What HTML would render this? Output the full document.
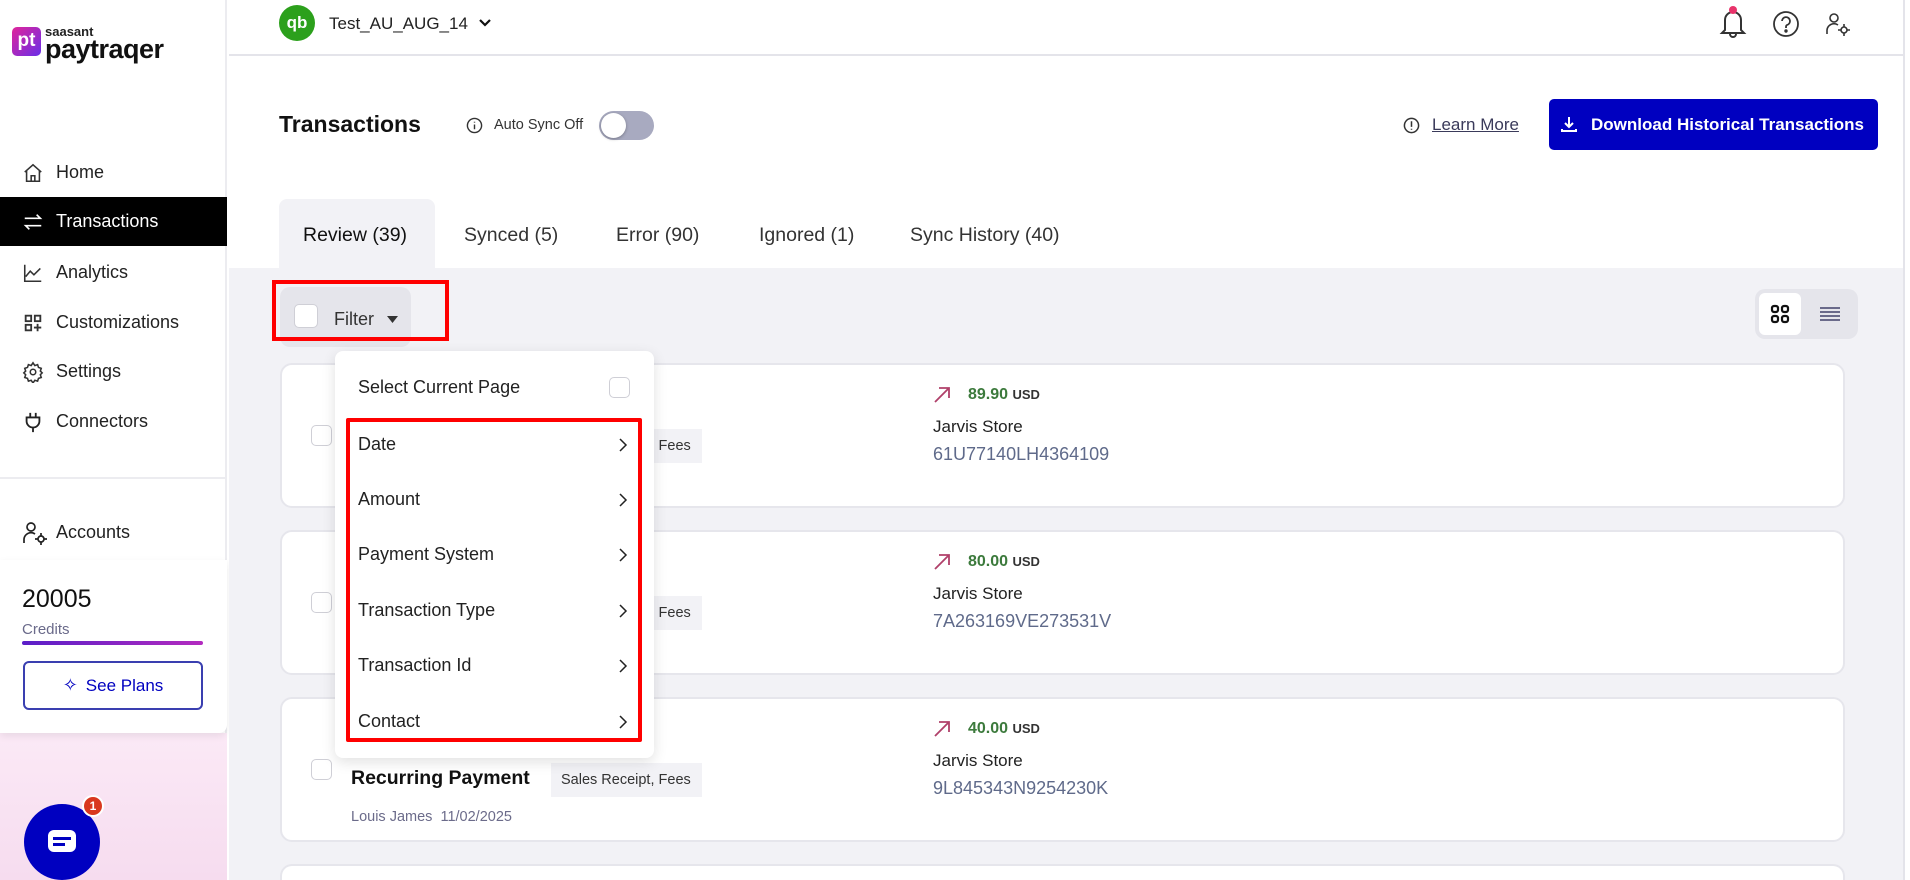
<!DOCTYPE html>
<html style="overflow:hidden;width:1910px;height:880px"><head><meta charset="utf-8"><style>
*{box-sizing:border-box;margin:0;padding:0}
body{width:1910px;height:880px;overflow:hidden;background:#fff;font-family:"Liberation Sans",sans-serif;color:#1a1a1a}
#w{position:relative;width:1910px;height:880px;overflow:hidden}
.a{position:absolute}
.nav{position:absolute;left:0;width:227px;height:49px;display:flex;align-items:center;font-size:18px;color:#222}
.nav svg{position:absolute;left:22px}
.nav span{position:absolute;left:56px}
.card{position:absolute;left:280px;width:1565px;height:145px;background:#fff;border:2px solid #e6e6ec;border-radius:12px}
.cb{position:absolute;width:21px;height:21px;border:1.5px solid #cfcfd6;border-radius:5px;background:#fff}
.mi{position:absolute;left:358px;font-size:18px;color:#222}
.chev{position:absolute;left:618px}
</style></head><body><div id="w">
<!-- sidebar -->
<div class="a" style="left:0;top:0;width:227px;height:880px;border-right:2px solid #ececf0;background:#fff"></div>
<div class="a" style="left:0;top:733px;width:227px;height:147px;background:linear-gradient(180deg,#fbe9f6,#f6dcef)"></div>
<div class="a" style="left:12px;top:27px;width:29px;height:29px;border-radius:5px;background:linear-gradient(135deg,#e0259b,#6a2ee8);color:#fff;font-weight:bold;font-size:19px;line-height:27px;text-align:center">pt</div>
<div class="a" style="left:45px;top:24px;font-size:13px;font-weight:bold;color:#222">saasant</div>
<div class="a" style="left:45px;top:34px;font-size:27px;font-weight:bold;color:#111;letter-spacing:-0.5px">paytraqer</div>

<div class="nav" style="top:148px"><svg width="22" height="22" viewBox="0 0 24 24" fill="none" stroke="#333" stroke-width="1.7"><path d="M3 11L12 3l9 8M5 9v12h14V9M10 21v-6h4v6"/></svg><span>Home</span></div>
<div class="nav" style="top:197px;background:#000;color:#fff"><svg width="22" height="22" viewBox="0 0 24 24" fill="none" stroke="#fff" stroke-width="1.8"><path d="M3 8h17l-4-4M21 16H4l4 4"/></svg><span>Transactions</span></div>
<div class="nav" style="top:248px"><svg width="22" height="22" viewBox="0 0 24 24" fill="none" stroke="#333" stroke-width="1.7"><path d="M3 3v18h18M4 16l5-6 4 4 7-7"/></svg><span>Analytics</span></div>
<div class="nav" style="top:298px"><svg width="22" height="22" viewBox="0 0 24 24" fill="none" stroke="#333" stroke-width="2"><rect x="4" y="4" width="6" height="6"/><rect x="14" y="4" width="6" height="6"/><rect x="4" y="14" width="6" height="6"/><path d="M17 13v8M13 17h8"/></svg><span>Customizations</span></div>
<div class="nav" style="top:347px"><svg width="22" height="22" viewBox="0 0 24 24" fill="none" stroke="#333" stroke-width="1.7"><circle cx="12" cy="12" r="3"/><path d="M12 2l2 3 3-1 1 3 3 1-1 3 2 2-2 2 1 3-3 1-1 3-3-1-2 3-2-3-3 1-1-3-3-1 1-3-2-2 2-2-1-3 3-1 1-3 3 1z"/></svg><span>Settings</span></div>
<div class="nav" style="top:397px"><svg width="22" height="22" viewBox="0 0 24 24" fill="none" stroke="#222" stroke-width="2"><path d="M9 2v5M15 2v5M5 7h14v4a7 7 0 0 1-14 0zM12 18v5"/></svg><span>Connectors</span></div>
<div class="a" style="left:0;top:477px;width:227px;height:2px;background:#ececf0"></div>
<div class="nav" style="top:508px"><svg width="26" height="26" viewBox="0 0 26 26" fill="none" stroke="#222" stroke-width="1.7"><circle cx="9" cy="7" r="4"/><path d="M2 23v-4a7 7 0 0 1 11-5"/><circle cx="19" cy="19" r="3"/><path d="M19 13v3M19 22v3M13 19h3M22 19h3"/></svg><span style="left:56px">Accounts</span></div>

<div class="a" style="left:0;top:560px;width:227px;height:173px;background:#fff;border-radius:0 0 8px 0;box-shadow:0 3px 8px rgba(0,0,0,.08)"></div>
<div class="a" style="left:22px;top:585px;font-size:25px;color:#111">20005</div>
<div class="a" style="left:22px;top:621px;font-size:15px;color:#6a6a8a">Credits</div>
<div class="a" style="left:22px;top:641px;width:181px;height:4px;border-radius:2px;background:linear-gradient(90deg,#5a1ec8,#b32bbf)"></div>
<div class="a" style="left:23px;top:661px;width:180px;height:49px;border:2px solid #3a3fb0;border-radius:6px;display:flex;align-items:center;justify-content:center;gap:8px;color:#0000c0;font-size:17px"><span style="font-size:18px">✧</span>See Plans</div>

<div class="a" style="left:24px;top:804px;width:76px;height:76px;border-radius:50%;background:#0000c0"></div>
<div class="a" style="left:48px;top:830px;width:28px;height:22px;border-radius:6px;background:#fff"></div>
<div class="a" style="left:53px;top:837px;width:18px;height:3px;background:#0000c0"></div>
<div class="a" style="left:53px;top:843px;width:12px;height:3px;background:#0000c0"></div>
<div class="a" style="left:82px;top:795px;width:22px;height:22px;border-radius:50%;background:#d9381e;border:2px solid #fff;color:#fff;font-size:12px;font-weight:bold;text-align:center;line-height:18px">1</div>

<!-- header -->
<div class="a" style="left:229px;top:54px;width:1675px;height:2px;background:#e4e4ea"></div>
<div class="a" style="left:1903px;top:0;width:2px;height:880px;background:#e4e4ea"></div>
<div class="a" style="left:279px;top:5px;width:36px;height:36px;border-radius:50%;background:#2ca01c;color:#fff;font-weight:bold;font-size:17px;line-height:36px;text-align:center">qb</div>
<div class="a" style="left:329px;top:14px;font-size:17px;color:#222">Test_AU_AUG_14</div>
<svg class="a" style="left:478px;top:17px" width="14" height="12" viewBox="0 0 14 12"><path d="M2 3l5 5 5-5" fill="none" stroke="#111" stroke-width="2.2"/></svg>
<svg class="a" style="left:1719px;top:3px" width="28" height="36" viewBox="0 0 28 36" fill="none" stroke="#333" stroke-width="2"><path d="M6 27V17a8 8 0 0 1 16 0v10l3 3H3zM11 31a3 3 0 0 0 6 0"/><circle cx="14" cy="7" r="4" fill="#e8336b" stroke="none"/></svg>
<svg class="a" style="left:1772px;top:10px" width="28" height="28" viewBox="0 0 28 28" fill="none" stroke="#333" stroke-width="1.8"><circle cx="14" cy="14" r="12"/><path d="M10 11a4 4 0 1 1 5 4c-1 .5-1 1-1 3"/><circle cx="14" cy="21" r=".8" fill="#333"/></svg>
<svg class="a" style="left:1825px;top:11px" width="26" height="26" viewBox="0 0 26 26" fill="none" stroke="#333" stroke-width="1.6"><circle cx="9" cy="7" r="4"/><path d="M2 23v-4a7 7 0 0 1 11-5"/><circle cx="19" cy="19" r="3"/><path d="M19 13v3M19 22v3M13 19h3M22 19h3"/></svg>

<div class="a" style="left:279px;top:111px;font-size:23px;font-weight:bold;color:#111">Transactions</div>
<svg class="a" style="left:466px;top:117px" width="17" height="17" viewBox="0 0 18 18" fill="none" stroke="#333" stroke-width="1.5"><circle cx="9" cy="9" r="7.5"/><path d="M9 8v5M9 5v1"/></svg>
<div class="a" style="left:494px;top:117px;font-size:14.5px;color:#333">Auto Sync Off</div>
<div class="a" style="left:599px;top:111px;width:55px;height:29px;border-radius:15px;background:#a8aac0"></div>
<div class="a" style="left:601px;top:113px;width:25px;height:25px;border-radius:50%;background:#fff;box-shadow:0 1px 3px rgba(0,0,0,.3)"></div>

<svg class="a" style="left:1403px;top:117px" width="17" height="17" viewBox="0 0 18 18" fill="none" stroke="#333" stroke-width="1.6"><circle cx="9" cy="9" r="7.5"/><path d="M9 4.5v6M9 12.5v1"/></svg>
<div class="a" style="left:1432px;top:115px;font-size:17px;color:#3a3a5a;text-decoration:underline">Learn More</div>
<div class="a" style="left:1549px;top:99px;width:329px;height:51px;border-radius:5px;background:#0000c0;color:#fff;font-size:17px;font-weight:bold;display:flex;align-items:center;padding-left:42px;white-space:nowrap">Download Historical Transactions</div>
<svg class="a" style="left:1560px;top:115px" width="18" height="18" viewBox="0 0 18 18" fill="none" stroke="#fff" stroke-width="2"><path d="M9 2v10M5 8l4 4 4-4M2 14v2h14v-2"/></svg>

<!-- tabs -->
<div class="a" style="left:229px;top:268px;width:1674px;height:612px;background:#f2f2f6"></div>
<div class="a" style="left:279px;top:199px;width:156px;height:70px;background:#f2f2f6;border-radius:8px 8px 0 0"></div>
<div class="a" style="left:303px;top:224px;font-size:19.5px;color:#111">Review (39)</div>
<div class="a" style="left:464px;top:224px;font-size:19.5px;color:#333">Synced (5)</div>
<div class="a" style="left:616px;top:224px;font-size:19.5px;color:#333">Error (90)</div>
<div class="a" style="left:759px;top:224px;font-size:19.5px;color:#333">Ignored (1)</div>
<div class="a" style="left:910px;top:224px;font-size:19.5px;color:#333">Sync History (40)</div>

<!-- filter -->
<div class="a" style="left:280px;top:287px;width:131px;height:60px;background:#e5e5eb;border-radius:10px"></div>
<div class="cb" style="left:294px;top:304px;width:24px;height:24px"></div>
<div class="a" style="left:334px;top:309px;font-size:18px;color:#333">Filter</div>
<svg class="a" style="left:387px;top:316px" width="11" height="7" viewBox="0 0 11 7"><path d="M0 0h11L5.5 7z" fill="#333"/></svg>
<div class="a" style="left:272px;top:280px;width:177px;height:61px;border:4px solid #ff0000"></div>

<div class="a" style="left:1755px;top:289px;width:103px;height:50px;background:#e5e5eb;border-radius:10px"></div>
<div class="a" style="left:1759px;top:293px;width:42px;height:42px;background:#fff;border-radius:6px"></div>
<svg class="a" style="left:1770px;top:304px" width="20" height="20" viewBox="0 0 20 20" fill="none" stroke="#111" stroke-width="2.2"><rect x="2" y="2" width="6" height="6" rx="2"/><rect x="12" y="2" width="6" height="6" rx="2"/><rect x="2" y="12" width="6" height="6" rx="2"/><rect x="12" y="12" width="6" height="6" rx="2"/></svg>
<svg class="a" style="left:1820px;top:305px" width="20" height="18" viewBox="0 0 20 18" stroke="#6a6a8a" stroke-width="2"><path d="M0 3h20M0 7h20M0 11h20M0 15h20"/></svg>

<!-- cards -->
<div class="card" style="top:363px"></div>
<div class="card" style="top:530px"></div>
<div class="card" style="top:697px"></div>
<div class="card" style="top:864px;height:16px;border-bottom:none;border-radius:12px 12px 0 0"></div>

<div class="cb" style="left:311px;top:425px"></div>
<div class="a" style="left:551px;top:429px;width:151px;height:34px;background:#f2f2f6;font-size:14.5px;color:#333;line-height:34px;padding-left:10px">Sales Receipt, Fees</div>
<div class="cb" style="left:311px;top:592px"></div>
<div class="a" style="left:551px;top:596px;width:151px;height:34px;background:#f2f2f6;font-size:14.5px;color:#333;line-height:34px;padding-left:10px">Sales Receipt, Fees</div>
<div class="cb" style="left:311px;top:759px"></div>
<div class="a" style="left:351px;top:767px;font-size:19.5px;font-weight:bold;color:#111">Recurring Payment</div>
<div class="a" style="left:551px;top:763px;width:151px;height:34px;background:#f2f2f6;font-size:14.5px;color:#333;line-height:34px;padding-left:10px">Sales Receipt, Fees</div>
<div class="a" style="left:351px;top:809px;font-size:14.5px;color:#6b6b8a">Louis James&nbsp;&nbsp;11/02/2025</div>

<!-- amounts -->
<svg class="a" style="left:933px;top:386px" width="18" height="18" viewBox="0 0 18 18" fill="none" stroke="#b0406a" stroke-width="1.8"><path d="M2 16L16 2M6 2h10v10"/></svg>
<div class="a" style="left:968px;top:386px;font-size:16px;font-weight:bold;color:#3c7a3c">89.90 <span style="font-size:13px;color:#333">USD</span></div>
<div class="a" style="left:933px;top:417px;font-size:17px;color:#222">Jarvis Store</div>
<div class="a" style="left:933px;top:444px;font-size:18px;color:#5f6a8a">61U77140LH4364109</div>

<svg class="a" style="left:933px;top:553px" width="18" height="18" viewBox="0 0 18 18" fill="none" stroke="#b0406a" stroke-width="1.8"><path d="M2 16L16 2M6 2h10v10"/></svg>
<div class="a" style="left:968px;top:553px;font-size:16px;font-weight:bold;color:#3c7a3c">80.00 <span style="font-size:13px;color:#333">USD</span></div>
<div class="a" style="left:933px;top:584px;font-size:17px;color:#222">Jarvis Store</div>
<div class="a" style="left:933px;top:611px;font-size:18px;color:#5f6a8a">7A263169VE273531V</div>

<svg class="a" style="left:933px;top:720px" width="18" height="18" viewBox="0 0 18 18" fill="none" stroke="#b0406a" stroke-width="1.8"><path d="M2 16L16 2M6 2h10v10"/></svg>
<div class="a" style="left:968px;top:720px;font-size:16px;font-weight:bold;color:#3c7a3c">40.00 <span style="font-size:13px;color:#333">USD</span></div>
<div class="a" style="left:933px;top:751px;font-size:17px;color:#222">Jarvis Store</div>
<div class="a" style="left:933px;top:778px;font-size:18px;color:#5f6a8a">9L845343N9254230K</div>

<!-- dropdown -->
<div class="a" style="left:335px;top:351px;width:319px;height:407px;background:#fff;border-radius:8px;box-shadow:0 4px 14px rgba(0,0,0,.12)"></div>
<div class="mi" style="top:377px">Select Current Page</div>
<div class="cb" style="left:609px;top:377px"></div>
<div class="mi" style="top:434px">Date</div>
<div class="mi" style="top:489px">Amount</div>
<div class="mi" style="top:544px">Payment System</div>
<div class="mi" style="top:600px">Transaction Type</div>
<div class="mi" style="top:655px">Transaction Id</div>
<div class="mi" style="top:711px">Contact</div>
<svg class="chev" style="top:437px" width="10" height="16" viewBox="0 0 10 16"><path d="M2 2l6 6-6 6" fill="none" stroke="#222" stroke-width="1.5"/></svg>
<svg class="chev" style="top:492px" width="10" height="16" viewBox="0 0 10 16"><path d="M2 2l6 6-6 6" fill="none" stroke="#222" stroke-width="1.5"/></svg>
<svg class="chev" style="top:547px" width="10" height="16" viewBox="0 0 10 16"><path d="M2 2l6 6-6 6" fill="none" stroke="#222" stroke-width="1.5"/></svg>
<svg class="chev" style="top:603px" width="10" height="16" viewBox="0 0 10 16"><path d="M2 2l6 6-6 6" fill="none" stroke="#222" stroke-width="1.5"/></svg>
<svg class="chev" style="top:658px" width="10" height="16" viewBox="0 0 10 16"><path d="M2 2l6 6-6 6" fill="none" stroke="#222" stroke-width="1.5"/></svg>
<svg class="chev" style="top:714px" width="10" height="16" viewBox="0 0 10 16"><path d="M2 2l6 6-6 6" fill="none" stroke="#222" stroke-width="1.5"/></svg>
<div class="a" style="left:346px;top:418px;width:296px;height:324px;border:4px solid #ff0000;border-radius:2px"></div>
</div></body></html>
